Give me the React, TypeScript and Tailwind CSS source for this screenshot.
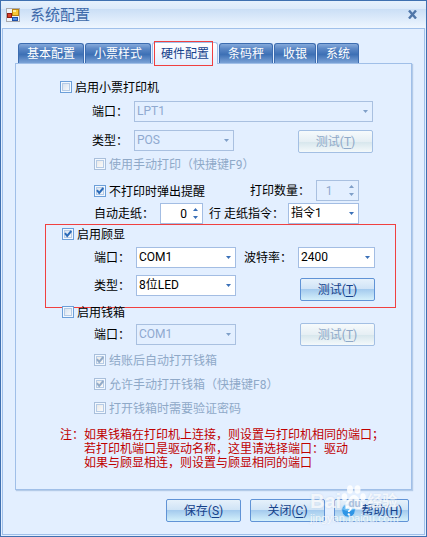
import React, { useId, useState } from "react";
import clsx from "clsx";

function Check({
  label,
  checked = false,
  disabled = false,
  className,
}: {
  label: string;
  checked?: boolean;
  disabled?: boolean;
  className?: string;
}) {
  const [on, setOn] = useState(checked);
  return (
    <label
      className={clsx(
        "flex h-4 items-center gap-[3px] whitespace-nowrap",
        disabled ? "text-[#8fa9c8]" : "text-black",
        className
      )}
    >
      <span className="grid size-3 shrink-0">
        <input
          type="checkbox"
          checked={on}
          disabled={disabled}
          onChange={() => setOn(!on)}
          className={clsx(
            "col-start-1 row-start-1 size-3 appearance-none border bg-linear-to-br p-0 shadow-[inset_0_0_0_1px_#f2f8ff,inset_0_0_0_2px_#b5cbe6]",
            disabled
              ? "border-[#a9bfdb] from-[#e4e4e4] to-white"
              : "border-[#6c9fd9] from-[#cfdcec] to-white"
          )}
        />
        {on && (
          <svg
            viewBox="0 0 12 12"
            className="pointer-events-none col-start-1 row-start-1 size-3"
            fill="none"
            stroke={disabled ? "#93abc8" : "#2a6ab8"}
            strokeWidth="2"
          >
            <path d="M3 5.2 L5.2 8 L9.3 3" />
          </svg>
        )}
      </span>
      <span className="pt-[2px]">{label}</span>
    </label>
  );
}

function Combo({
  id,
  value,
  disabled = false,
  className,
}: {
  id: string;
  value: string;
  disabled?: boolean;
  className?: string;
}) {
  return (
    <span
      className={clsx(
        "grid h-[21px] items-center border",
        disabled ? "border-[#a9c0e0]" : "border-[#a3bde3] bg-white",
        className
      )}
    >
      <select
        id={id}
        disabled={disabled}
        className={clsx(
          "col-start-1 row-start-1 h-[19px] w-full appearance-none bg-transparent pl-[2px] text-[12px] leading-[19px] opacity-100 outline-none",
          disabled ? "text-[#8fa9cf]" : "text-black"
        )}
      >
        <option>{value}</option>
      </select>
      <svg
        viewBox="0 0 5 3"
        className={clsx(
          "pointer-events-none col-start-1 row-start-1 mr-1 h-[3px] w-[5px] justify-self-end",
          disabled ? "fill-[#7f9fc8]" : "fill-[#3a70b8]"
        )}
      >
        <path d="M0 0H5L2.5 3Z" />
      </svg>
    </span>
  );
}

function Spinner({ id, value, disabled = false }: { id: string; value: string; disabled?: boolean }) {
  return (
    <span
      className={clsx(
        "flex h-[21px] w-[43px] items-center border pr-1",
        disabled ? "border-[#a9c0e0]" : "border-[#a3bde3] bg-white"
      )}
    >
      <input
        id={id}
        type="text"
        defaultValue={value}
        disabled={disabled}
        className={clsx(
          "h-[19px] min-w-0 flex-1 bg-transparent text-[12px] outline-none",
          disabled ? "pr-2 text-center text-[#8fa9cf]" : "pr-[6px] text-right text-black"
        )}
      />
      <svg
        viewBox="0 0 5 11"
        className={clsx("h-[11px] w-[5px]", disabled ? "fill-[#7f9fc8]" : "fill-[#3a70b8]")}
      >
        <path d="M0 3H5L2.5 0ZM0 8H5L2.5 11Z" />
      </svg>
    </span>
  );
}

function PushButton({
  text,
  hotkey,
  disabled = false,
  icon,
  className,
}: {
  text: string;
  hotkey: string;
  disabled?: boolean;
  icon?: React.ReactNode;
  className?: string;
}) {
  return (
    <button
      type="button"
      disabled={disabled}
      className={clsx(
        "flex h-[23px] w-[75px] shrink-0 items-center justify-center rounded-[2px] border whitespace-nowrap",
        disabled
          ? "border-[#a3bfe3] bg-[linear-gradient(#f6fafc,#e6eff4_50%,#d6e6ec_51%,#f4f9fb)] text-[#8fa9c8]"
          : "border-[#6093d6] bg-[linear-gradient(#e6f1fb,#cfe3f6_48%,#a5cbee_50%,#d4f0fb)] text-[#15428b]",
        className
      )}
    >
      {icon}
      <span className="pt-px">
        {text}(<span className="underline underline-offset-2">{hotkey}</span>)
      </span>
    </button>
  );
}

const tabs = ["基本配置", "小票样式", "硬件配置", "条码秤", "收银", "系统"];

function TabStrip() {
  return (
    <div role="tablist" className="flex items-end gap-px pl-[3px]">
      {tabs.map((name) =>
        name === "硬件配置" ? (
          <button
            key={name}
            type="button"
            role="tab"
            aria-selected="true"
            className="relative z-10 -mb-px h-[22px] rounded-t-[3px] border border-b-0 border-[#a0c0ea] bg-linear-to-b from-white to-[#e3efff] px-2 pt-px text-[#15428b]"
          >
            {name}
            <span className="pointer-events-none absolute -top-[2px] right-1 -bottom-[2px] left-px border border-[#f04040]" />
          </button>
        ) : (
          <button
            key={name}
            type="button"
            role="tab"
            aria-selected="false"
            className="h-5 rounded-t-[3px] border border-b-0 border-[#3c6cb0] bg-[linear-gradient(#86aadb,#5c88c6_25%,#3d70b5_55%,#7ba2d6)] px-2 pt-px text-white"
          >
            {name}
          </button>
        )
      )}
    </div>
  );
}

function AppIcon() {
  return (
    <svg viewBox="0 0 14 14" className="size-[14px]">
      <rect x="0.5" y="0.5" width="13" height="13" fill="#eef3fa" stroke="#a9a9ad" />
      <rect x="6.5" y="1.5" width="6" height="6" fill="#f9c835" stroke="#b98210" />
      <rect x="7" y="2" width="3" height="2" fill="#fdeb9a" />
      <rect x="1.5" y="5.5" width="4" height="4" fill="#d9402c" stroke="#8e1c14" />
      <rect x="6.5" y="9.5" width="5" height="3" fill="#4f8fe8" stroke="#1f50a8" />
    </svg>
  );
}

function HelpIcon() {
  return (
    <svg viewBox="0 0 16 16" className="mr-[6px] size-[15px] shrink-0">
      <circle cx="8" cy="8" r="7.2" fill="#2f96e6" stroke="#a9d4f5" />
      <path d="M2 7a6 5.4 0 0 1 12 0c-3 2-9 2-12 0Z" fill="#6cbdf4" />
      <path
        d="M5.6 6.2c0-3.4 5-3.2 5-.4 0 1.8-2.4 1.8-2.4 3.8"
        fill="none"
        stroke="#fff"
        strokeWidth="1.9"
      />
      <circle cx="8.2" cy="12" r="1.2" fill="#fff" />
    </svg>
  );
}

function Watermark() {
  return (
    <div className="pointer-events-none absolute right-[26px] bottom-[7px] w-[90px] font-['Liberation_Sans','Noto_Sans_CJK_SC',sans-serif] text-white/75 [text-shadow:0_0_2px_#9fb6d266]">
      <div className="flex items-center">
        <span className="pt-[6px] text-[20px] leading-5 font-bold">Bai</span>
        <svg viewBox="0 0 26 28" className="h-7 w-[26px] fill-white/85">
          <ellipse cx="3.5" cy="13" rx="2.8" ry="3.8" />
          <ellipse cx="9" cy="5.5" rx="3" ry="4.3" />
          <ellipse cx="16.5" cy="5.5" rx="3" ry="4.3" />
          <ellipse cx="22" cy="13" rx="2.8" ry="3.8" />
          <path d="M13 11c4 0 4.500 4 7 6.500 3.500 3.500 1.500 8-2.500 7.500-3-.5-6-.5-9 0-4 .5-6-4-2.500-7.500C8.500 15 9 11 13 11Z" />
          <text x="7.500" y="23" fontSize="10" fontWeight="bold" fill="#a9bfdd">
            du
          </text>
        </svg>
        <span className="pt-[6px] text-[15px] leading-5 font-bold">经验</span>
      </div>
      <div className="pb-[5px] text-[11px] leading-3">jingyan.baidu.com</div>
    </div>
  );
}

export default function App() {
  const id = useId();
  return (
    <div className="relative flex min-h-screen w-full flex-col border border-[#3f70b0] bg-[#e3efff] font-['Roboto','Noto_Sans_CJK_SC',sans-serif] text-[12px] leading-4 text-black">
      <header className="flex h-[27px] items-center bg-[linear-gradient(#e6f1fd,#dceafa_30%,#cbdff6_31%,#eef6ff)] pr-[9px] pl-[5px]">
        <AppIcon />
        <h1 className="ml-[10px] text-[15px] leading-5 text-[#3e6aaa]">系统配置</h1>
        <button type="button" aria-label="关闭窗口" className="ml-auto">
          <svg viewBox="0 0 9 9" className="size-[9px]" fill="none" stroke="#5076a8" strokeWidth="2.4">
            <path d="M1 0.5 8 8.5M8 0.5 1 8.5" />
          </svg>
        </button>
      </header>

      <main className="mx-px mb-px flex-1 border border-[#a0c0ea] px-3 pt-[13px] pb-3">
        <TabStrip />

        <section className="border border-[#a0bfe8] pt-[15px] pb-[19px] shadow-[1px_1px_1px_#b4cbe8]">
          <div className="pr-[38px] pl-[44px]">
            <Check label="启用小票打印机" />
            <div className="mt-[6px] ml-8 flex items-center">
              <label htmlFor={id + "p1"} className="w-[42px] pt-px">端口：</label>
              <Combo id={id + "p1"} value="LPT1" disabled className="flex-1" />
            </div>
            <div className="mt-2 ml-8 flex items-start">
              <label htmlFor={id + "t1"} className="w-[42px] pt-[3px]">类型：</label>
              <Combo id={id + "t1"} value="POS" disabled className="w-[100px]" />
              <PushButton text="测试" hotkey="T" disabled className="ml-auto" />
            </div>
            <Check label="使用手动打印（快捷键F9）" disabled className="mt-[3px] ml-[34px]" />
            <div className="mt-2 mr-[14px] ml-[34px] flex items-center">
              <Check label="不打印时弹出提醒" checked />
              <label htmlFor={id + "n1"} className="ml-auto w-[66px] pt-px">打印数量：</label>
              <Spinner id={id + "n1"} value="1" disabled />
            </div>
            <div className="mt-[2px] mr-[14px] ml-[34px] flex items-center whitespace-nowrap">
              <label htmlFor={id + "n2"} className="w-[66px] pt-px">自动走纸：</label>
              <Spinner id={id + "n2"} value="0" />
              <span className="ml-[6px] pt-px">行</span>
              <label htmlFor={id + "c1"} className="ml-[3px] pt-px">走纸指令：</label>
              <Combo id={id + "c1"} value="指令1" className="ml-auto w-[71px]" />
            </div>
          </div>

          <div className="mr-[15px] ml-[29px] border border-[#f04040] pt-px pr-5 pb-[6px] pl-4">
            <Check label="启用顾显" checked />
            <div className="mt-[5px] ml-8 flex items-center">
              <label htmlFor={id + "p2"} className="w-[42px] pt-px">端口：</label>
              <Combo id={id + "p2"} value="COM1" className="w-[100px]" />
              <label htmlFor={id + "b2"} className="ml-2 w-[54px] pt-px">波特率：</label>
              <Combo id={id + "b2"} value="2400" className="flex-1" />
            </div>
            <div className="mt-[7px] ml-8 flex h-[26px] items-start">
              <label htmlFor={id + "t2"} className="w-[42px] pt-[3px]">类型：</label>
              <Combo id={id + "t2"} value="8位LED" className="w-[100px]" />
              <PushButton text="测试" hotkey="T" className="ml-auto self-end" />
            </div>
          </div>

          <div className="-mt-1 pr-9 pl-[46px]">
            <Check label="启用钱箱" />
            <div className="mt-[3px] ml-8 flex items-center">
              <label htmlFor={id + "p3"} className="w-[42px] pt-px">端口：</label>
              <Combo id={id + "p3"} value="COM1" disabled className="w-[100px]" />
              <PushButton text="测试" hotkey="T" disabled className="ml-auto" />
            </div>
            <div className="mt-[6px] ml-8 flex flex-col gap-2">
              <Check label="结账后自动打开钱箱" checked disabled />
              <Check label="允许手动打开钱箱（快捷键F8）" checked disabled />
              <Check label="打开钱箱时需要验证密码" disabled />
            </div>
          </div>

          <div className="mt-3 flex pl-[44px] leading-[14px] text-[#c00000]">
            <span className="w-6 shrink-0">注：</span>
            <p>
              如果钱箱在打印机上连接，则设置与打印机相同的端口；
              <br />
              若打印机端口是驱动名称，这里请选择端口：驱动
              <br />
              如果与顾显相连，则设置与顾显相同的端口
            </p>
          </div>
        </section>

        <footer className="mt-[9px] flex justify-end gap-[9px] pr-[3px]">
          <PushButton text="保存" hotkey="S" />
          <PushButton text="关闭" hotkey="C" />
          <PushButton text="帮助" hotkey="H" icon={<HelpIcon />} />
        </footer>
      </main>

      <Watermark />
    </div>
  );
}
